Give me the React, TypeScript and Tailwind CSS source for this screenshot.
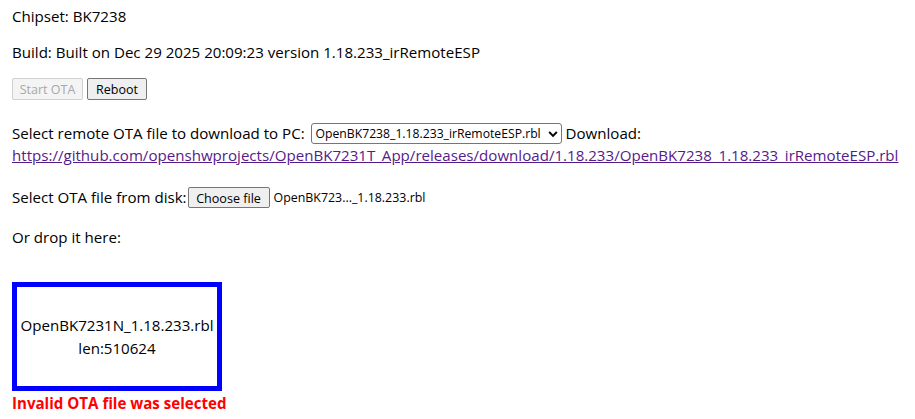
export default function App() {
  const remoteFile = "OpenBK7238_1.18.233_irRemoteESP.rbl";
  const link =
    "https://github.com/openshwprojects/OpenBK7231T_App/releases/download/1.18.233/OpenBK7238_1.18.233_irRemoteESP.rbl";

  return (
    <div className="min-h-[419px] bg-white pl-[12px] pt-[6px] text-[15.1px] leading-[21px] text-black [font-family:'Open_Sans',sans-serif]">
      <p>Chipset: BK7238</p>
      <p className="mt-[15px]">Build: Built on Dec 29 2025 20:09:23 version 1.18.233_irRemoteESP</p>

      <div className="mt-[15px] flex gap-[4px]">
        <button
          disabled
          className="h-[22px] w-[71px] rounded-[2px] border border-[#d0d0d0] bg-[#f4f4f4] text-[12.5px] text-[#a8a8a8]"
        >
          Start OTA
        </button>
        <button className="h-[22px] w-[60px] rounded-[2px] border border-[#767676] bg-[#efefef] text-[12.5px] text-black">
          Reboot
        </button>
      </div>

      <div className="mt-[22px] flex h-[22px] items-center whitespace-nowrap">
        <span>Select remote OTA file to download to PC:&nbsp;</span>
        <div className="ml-[2px] flex h-[21px] w-[251px] items-center justify-between rounded-[3px] border border-[#767676] bg-white pl-[4px] pr-[3px] text-[12.2px]">
          <span>{remoteFile}</span>
          <svg width="10" height="8" viewBox="0 0 10 8" className="mt-[1px]">
            <path d="M1.2 2 L5 5.8 L8.8 2" fill="none" stroke="black" strokeWidth="1.9" />
          </svg>
        </div>
        <span>&nbsp;Download:</span>
      </div>
      <div className="flex h-[22px] items-center whitespace-nowrap">
        <a href="#" className="text-[#551a8b] underline">
          {link}
        </a>
      </div>

      <div className="mt-[20px] flex h-[22px] items-center whitespace-nowrap">
        <span>Select OTA file from disk:</span>
        <button className="ml-[1px] h-[21px] w-[82px] rounded-[2px] border border-[#767676] bg-[#efefef] text-[12.6px] text-black">
          Choose file
        </button>
        <span className="ml-[4px] text-[12.4px]">OpenBK723..._1.18.233.rbl</span>
      </div>

      <p className="mt-[18px] h-[22px] leading-[22px]">Or drop it here:</p>

      <div className="mt-[34px] flex h-[109px] w-[210px] flex-col items-center justify-center border-[5px] border-[#0000ff] text-center leading-[23px]">
        <div>OpenBK7231N_1.18.233.rbl</div>
        <div>len:510624</div>
      </div>
      <p className="mt-[2px] font-bold text-[#ff0000]">Invalid OTA file was selected</p>
    </div>
  );
}
